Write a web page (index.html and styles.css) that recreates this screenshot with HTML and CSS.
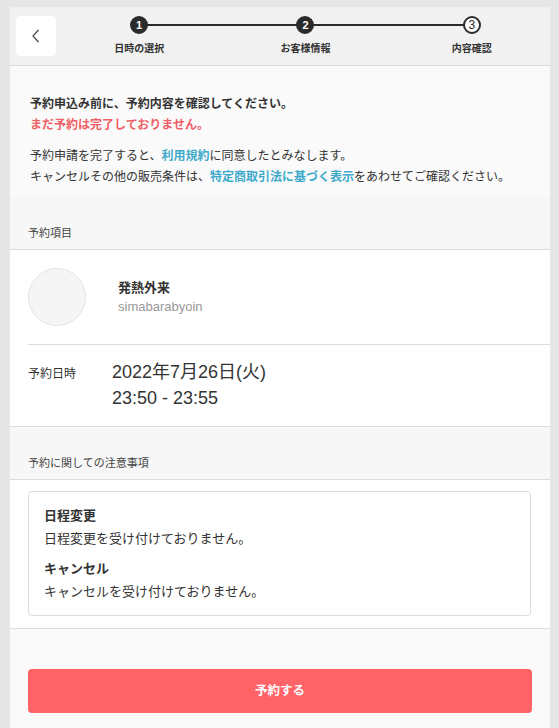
FILE: index.html
```html
<!DOCTYPE html>
<html lang="ja">
  <head>
    <meta charset="UTF-8">
    <meta name="viewport" content="width=device-width, initial-scale=1">
    <title>予約内容の確認</title>
    <link rel="stylesheet" href="styles.css">
  </head>
  <body>

    <div class="page">

      <header class="top">
        <button class="back" type="button" aria-label="戻る">
          <svg width="10" height="14" viewBox="0 0 10 14"><polyline points="7.5,1 2,7 7.5,13" fill="none" stroke="#444" stroke-width="1.2"/></svg>
        </button>
        <ol class="steps">
          <li class="step is-done"><span class="step-num">1</span><span class="step-label">日時の選択</span></li>
          <li class="step is-done"><span class="step-num">2</span><span class="step-label">お客様情報</span></li>
          <li class="step is-current"><span class="step-num">3</span><span class="step-label">内容確認</span></li>
        </ol>
      </header>

      <section class="notice">
        <p>
          <strong>予約申込み前に、予約内容を確認してください。</strong><br>
          <strong class="warn">まだ予約は完了しておりません。</strong>
        </p>
        <p>
          予約申請を完了すると、<a href="#">利用規約</a>に同意したとみなします。<br>
          キャンセルその他の販売条件は、<a href="#">特定商取引法に基づく表示</a>をあわせてご確認ください。
        </p>
      </section>

      <h2 class="section-head">予約項目</h2>
      <div class="summary">
        <div class="menu">
          <div class="avatar"></div>
          <div class="menu-text">
            <p class="menu-name">発熱外来</p>
            <p class="menu-owner">simabarabyoin</p>
          </div>
        </div>
        <dl class="datetime">
          <dt>予約日時</dt>
          <dd>2022年7月26日(火)<br>23:50 - 23:55</dd>
        </dl>
      </div>

      <h2 class="section-head">予約に関しての注意事項</h2>
      <div class="terms">
        <div class="terms-card">
          <h3>日程変更</h3>
          <p>日程変更を受け付けておりません。</p>
          <h3>キャンセル</h3>
          <p>キャンセルを受け付けておりません。</p>
        </div>
      </div>

      <div class="actions">
        <button class="submit" type="button">予約する</button>
      </div>

    </div>

  </body>
</html>
```

FILE: styles.css
```css
:root {
  --clr-outer:   #e6e6e6;
  --clr-head:    #f1f1f1;
  --clr-soft:    #fafafa;
  --clr-band:    #f7f7f7;
  --clr-line:    #dcdcdc;
  --clr-text:    #333;
  --clr-muted:   #999;
  --clr-dark:    #2b2b2b;
  --clr-warn:    #ef5f67;
  --clr-link:    #3eaacb;
  --clr-accent:  #ff6368;
}

*, *::before, *::after {
  box-sizing: border-box;
}

html, body {
  margin: 0;
  padding: 0;
}

body {
  padding-top: 7px;
  background-color: var(--clr-outer);
  color: var(--clr-text);
  font: normal normal 12px/1.6 "Liberation Sans", "Noto Sans CJK JP", sans-serif;
}

p, h2, h3, dl, dd, ol {
  margin: 0;
  padding: 0;
}

button {
  font: inherit;
  border: none;
  cursor: pointer;
}

.page {
  width: 540px;
  margin-left: 10px;
  background-color: #fff;
}


/* Header with steps
 *
 */

.top {
  display: flex;
  align-items: flex-start;
  height: 59px;
  padding: 9px 0 0 6px;
  background-color: var(--clr-head);
  border-bottom: 1px solid var(--clr-line);
}

.back {
  display: flex;
  align-items: center;
  justify-content: center;
  flex: none;
  width: 40px;
  height: 40px;
  padding: 0;
  border-radius: 4px;
  background-color: #fff;
}

.steps {
  flex: 1;
  display: grid;
  grid-template-columns: repeat(3, 1fr);
  margin-right: -5px;
  list-style: none;
}

.step {
  position: relative;
  display: flex;
  flex-direction: column;
  align-items: center;
}

.step::before,
.step::after {
  position: absolute;
  top: 8px;
  height: 2px;
  width: 50%;
  background-color: var(--clr-dark);
  content: '';
}
.step::before { left: 0 }
.step::after { right: 0 }
.step:first-child::before,
.step:last-child::after { display: none }

.step-num {
  position: relative;
  z-index: 1;
  display: flex;
  align-items: center;
  justify-content: center;
  width: 18px;
  height: 18px;
  border-radius: 50%;
  border: 2px solid var(--clr-dark);
  background-color: var(--clr-dark);
  color: #fff;
  font-size: 11px;
  font-weight: 700;
  line-height: 1;
}

.step.is-current .step-num {
  background-color: #fff;
  color: var(--clr-dark);
  font-weight: 400;
  font-size: 12px;
}

.step-label {
  margin-top: 8px;
  font-size: 10px;
  font-weight: 700;
  line-height: 14px;
}


/* Notice
 *
 */

.notice {
  display: flex;
  flex-direction: column;
  gap: 10px;
  padding: 28px 20px 9px;
  background-color: var(--clr-soft);
  line-height: 21px;
}

.warn {
  color: var(--clr-warn);
}

.notice a {
  color: var(--clr-link);
  font-weight: 700;
  text-decoration: none;
}


/* Sections
 *
 */

.section-head {
  padding: 28px 18px 8px;
  background-color: var(--clr-band);
  border-bottom: 1px solid var(--clr-line);
  color: #444;
  font-size: 11px;
  font-weight: 400;
  line-height: 16px;
}

.summary {
  padding-left: 18px;
  border-bottom: 1px solid var(--clr-line);
}

.menu {
  display: flex;
  align-items: center;
  gap: 32px;
  padding: 18px 0;
  border-bottom: 1px solid var(--clr-line);
}

.avatar {
  flex: none;
  width: 58px;
  height: 58px;
  border-radius: 50%;
  border: 1px solid #e4e4e4;
  background-color: #f5f5f5;
}

.menu-name {
  font-size: 13px;
  font-weight: 700;
  line-height: 19px;
}

.menu-owner {
  color: var(--clr-muted);
  font-size: 13px;
  line-height: 19px;
}

.datetime {
  display: flex;
  padding: 14px 0 15px;
}

.datetime dt {
  width: 84px;
  padding-top: 2px;
  font-size: 12px;
  line-height: 26px;
}

.datetime dd {
  font-size: 18px;
  line-height: 26px;
}

.terms {
  padding: 11px 19px 12px 18px;
  border-bottom: 1px solid var(--clr-line);
}

.terms-card {
  padding: 12px 15px;
  border: 1px solid var(--clr-line);
  border-radius: 4px;
  font-size: 13px;
  line-height: 23px;
}

.terms-card h3 {
  font-size: 13px;
  font-weight: 700;
}

.terms-card p + h3 {
  margin-top: 7px;
}


/* Submit
 *
 */

.actions {
  padding: 40px 18px 40px;
  background-color: var(--clr-soft);
}

.submit {
  display: block;
  width: 100%;
  height: 44px;
  border-radius: 4px;
  background-color: var(--clr-accent);
  color: #fff;
  font-size: 12.5px;
  font-weight: 700;
}
```
